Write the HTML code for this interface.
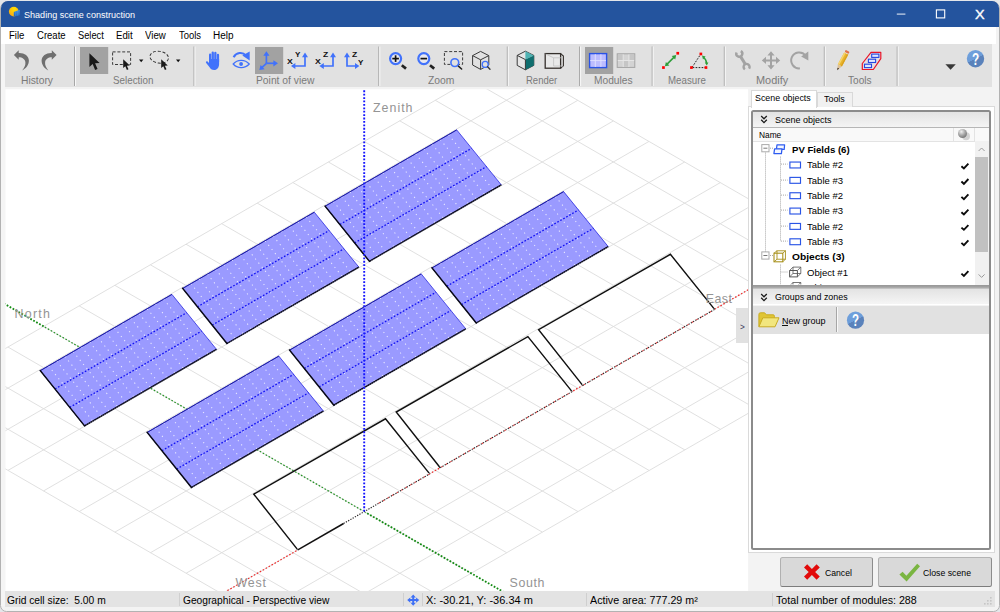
<!DOCTYPE html>
<html><head><meta charset="utf-8"><title>Shading scene construction</title>
<style>
html,body{margin:0;padding:0;}
body{width:1000px;height:612px;overflow:hidden;background:#f0f0f0;position:relative;font-family:"Liberation Sans",sans-serif;}
.a{position:absolute;}
.t{position:absolute;white-space:pre;transform-origin:0 0;display:block;}
svg{position:absolute;overflow:visible;}
</style></head><body>
<div class="a" style="left:0;top:0;width:1000px;height:612px;background:#e4e6ea"></div>
<div class="a" style="left:0;top:1px;width:1000px;height:610.6px;box-sizing:border-box;background:#f3f3f3;border:1.1px solid #b2b2b2;border-radius:8px 8px 6.5px 6.5px"></div>
<div class="a" style="left:0.5px;top:1px;width:998.5px;height:25.7px;background:#24549e;border-radius:7px 7px 0 0"></div>
<svg style="left:8px;top:5px" width="14" height="14" viewBox="0 0 14 14">
<defs><radialGradient id="sun" cx="0.55" cy="0.25" r="0.8"><stop offset="0" stop-color="#ffe000"/><stop offset="1" stop-color="#f7a516"/></radialGradient>
<linearGradient id="pvb" x1="0" y1="0" x2="0" y2="1"><stop offset="0" stop-color="#3f8fe0"/><stop offset="1" stop-color="#1d62b8"/></linearGradient></defs>
<circle cx="5.8" cy="6.6" r="4.9" fill="url(#sun)"/>
<path d="M5.8 6.9 L11.9 4.8 L11.9 10.2 L5.8 11.6 Z" fill="url(#pvb)"/>
<path d="M7.8 6.3V11.1M9.8 5.6V10.7" stroke="#5aa3ea" stroke-width="0.5"/>
</svg>
<span class="t" style="left:23.80px;top:9px;font-size:9.6px;line-height:11px;color:#fff;transform:scaleX(0.9429);">Shading scene construction</span>
<svg style="left:890px;top:4px" width="100" height="20" viewBox="890 4 100 20">
<path d="M896.8 14.1H905.4" stroke="#dfe6f2" stroke-width="1.1"/>
<rect x="936.4" y="9.9" width="8.3" height="8" fill="none" stroke="#fff" stroke-width="1.1"/>
</svg>
<span class="t" style="left:974.60px;top:8px;font-size:12.5px;line-height:14px;color:#fff;transform:scaleX(1.1514);-webkit-text-stroke:0.35px #fff;">X</span>
<div class="a" style="left:1px;top:26.7px;width:994.5px;height:17.3px;background:#fff"></div>
<span class="t" style="left:9.40px;top:30px;font-size:10px;line-height:11px;color:#000;transform:scaleX(0.9558);">File</span>
<span class="t" style="left:36.80px;top:30px;font-size:10px;line-height:11px;color:#000;transform:scaleX(0.9529);">Create</span>
<span class="t" style="left:77.60px;top:30px;font-size:10px;line-height:11px;color:#000;transform:scaleX(0.9283);">Select</span>
<span class="t" style="left:116.00px;top:30px;font-size:10px;line-height:11px;color:#000;transform:scaleX(0.9634);">Edit</span>
<span class="t" style="left:144.80px;top:30px;font-size:10px;line-height:11px;color:#000;transform:scaleX(0.9677);">View</span>
<span class="t" style="left:178.50px;top:30px;font-size:10px;line-height:11px;color:#000;transform:scaleX(0.9424);">Tools</span>
<span class="t" style="left:213.00px;top:30px;font-size:10px;line-height:11px;color:#000;transform:scaleX(0.9968);">Help</span>
<div class="a" style="left:1.1px;top:44px;width:4.2px;height:562px;background:#f5f5f5"></div>
<div class="a" style="left:5px;top:44px;width:987px;height:43px;background:#e1e1e1"></div>
<div class="a" style="left:5.2px;top:591px;width:989.6px;height:15.7px;background:#e3e3e3"></div>
<div class="a" style="left:178.9px;top:593.4px;width:1px;height:13px;background:#cfcfcf"></div>
<div class="a" style="left:403.0px;top:593.4px;width:1px;height:13px;background:#cfcfcf"></div>
<div class="a" style="left:421.7px;top:593.4px;width:1px;height:13px;background:#cfcfcf"></div>
<div class="a" style="left:586.1px;top:593.4px;width:1px;height:13px;background:#cfcfcf"></div>
<div class="a" style="left:772.0px;top:593.4px;width:1px;height:13px;background:#cfcfcf"></div>
<span class="t" style="left:6.50px;top:595px;font-size:10.2px;line-height:11px;color:#000;transform:scaleX(1.0075);">Grid cell size: &nbsp;5.00 m</span>
<span class="t" style="left:183.30px;top:595px;font-size:10.2px;line-height:11px;color:#000;transform:scaleX(1.0017);">Geographical - Perspective view</span>
<span class="t" style="left:425.50px;top:595px;font-size:10.2px;line-height:11px;color:#000;transform:scaleX(1.0805);">X: -30.21, Y: -36.34 m</span>
<span class="t" style="left:590.20px;top:595px;font-size:10.2px;line-height:11px;color:#000;transform:scaleX(1.0516);">Active area: 777.29 m²</span>
<span class="t" style="left:776.40px;top:595px;font-size:10.2px;line-height:11px;color:#000;transform:scaleX(1.0486);">Total number of modules: 288</span>
<svg style="left:407.4px;top:593.9px" width="12.4" height="12.2" viewBox="0 0 14 13">
<path d="M7 0.2 L10 3.5 H8.1 V5.4 H10.3 V3.5 L13.8 6.5 L10.3 9.5 V7.6 H8.1 V9.5 H10 L7 12.8 L4 9.5 H5.9 V7.6 H3.7 V9.5 L0.2 6.5 L3.7 3.5 V5.4 H5.9 V3.5 H4 Z" fill="#3f70f6"/>
</svg>
<svg style="left:981.6px;top:595.2px" width="11" height="11" viewBox="0 0 11 11">
<g fill="#c6c6c6"><rect x="8" y="2" width="1.6" height="1.6"/><rect x="5" y="5" width="1.6" height="1.6"/><rect x="8" y="5" width="1.6" height="1.6"/><rect x="2" y="8" width="1.6" height="1.6"/><rect x="5" y="8" width="1.6" height="1.6"/><rect x="8" y="8" width="1.6" height="1.6"/></g></svg>
<svg style="left:0;top:44px" width="1000" height="44" viewBox="0 44 1000 44"><path d="M74.5 46.5V86" stroke="#a6a6a6" stroke-width="1"/><path d="M75.5 46.5V86" stroke="#f8f8f8" stroke-width="1"/><path d="M194 46.5V86" stroke="#a6a6a6" stroke-width="1"/><path d="M195 46.5V86" stroke="#f8f8f8" stroke-width="1"/><path d="M378.8 46.5V86" stroke="#a6a6a6" stroke-width="1"/><path d="M379.8 46.5V86" stroke="#f8f8f8" stroke-width="1"/><path d="M507.3 46.5V86" stroke="#a6a6a6" stroke-width="1"/><path d="M508.3 46.5V86" stroke="#f8f8f8" stroke-width="1"/><path d="M579.6 46.5V86" stroke="#a6a6a6" stroke-width="1"/><path d="M580.6 46.5V86" stroke="#f8f8f8" stroke-width="1"/><path d="M652.2 46.5V86" stroke="#a6a6a6" stroke-width="1"/><path d="M653.2 46.5V86" stroke="#f8f8f8" stroke-width="1"/><path d="M724.3 46.5V86" stroke="#a6a6a6" stroke-width="1"/><path d="M725.3 46.5V86" stroke="#f8f8f8" stroke-width="1"/><path d="M824.3 46.5V86" stroke="#a6a6a6" stroke-width="1"/><path d="M825.3 46.5V86" stroke="#f8f8f8" stroke-width="1"/><path d="M897.2 46.5V86" stroke="#a6a6a6" stroke-width="1"/><path d="M898.2 46.5V86" stroke="#f8f8f8" stroke-width="1"/><rect x="80" y="47" width="28.2" height="27" fill="#a2a2a2"/><rect x="255" y="47" width="28.2" height="27" fill="#a2a2a2"/><rect x="585" y="47" width="28.2" height="27" fill="#a2a2a2"/><g><path d="M13.9 55 L18.7 50.2 V52.9 C24 52.6 28.9 55.6 28.9 60.6 C28.9 64.6 26.4 68.4 22.2 70.5 C24.6 67.6 25.6 65.2 25.4 62.6 C25.2 59.2 22.4 57.3 18.7 57.3 V59.8 Z" fill="#6f6f6f"/></g><g transform="translate(70.5,0) scale(-1,1)"><path d="M13.9 55 L18.7 50.2 V52.9 C24 52.6 28.9 55.6 28.9 60.6 C28.9 64.6 26.4 68.4 22.2 70.5 C24.6 67.6 25.6 65.2 25.4 62.6 C25.2 59.2 22.4 57.3 18.7 57.3 V59.8 Z" fill="#6f6f6f"/></g><path transform="translate(89.4,53.2) scale(1.02)" d="M0 0 L0 13.5 L3.2 10.6 L5.6 16.4 L8 15.4 L5.6 9.8 L10 9.6 Z" fill="#1a1a1a"/><rect x="112.6" y="51.9" width="18" height="12.6" fill="none" stroke="#333" stroke-width="0.95" stroke-dasharray="3 1.8"/><path transform="translate(123.2,59.2) scale(0.66)" d="M0 0 L0 13.5 L3.2 10.6 L5.6 16.4 L8 15.4 L5.6 9.8 L10 9.6 Z" fill="#1a1a1a"/><path d="M139 59.6h4.4l-2.2 2.6z" fill="#111"/><ellipse cx="159.2" cy="57.2" rx="9.3" ry="5.9" fill="none" stroke="#333" stroke-width="0.95" stroke-dasharray="3 1.8" transform="rotate(8 159.2 57.2)"/><path transform="translate(161.2,59.2) scale(0.66)" d="M0 0 L0 13.5 L3.2 10.6 L5.6 16.4 L8 15.4 L5.6 9.8 L10 9.6 Z" fill="#1a1a1a"/><path d="M176 59.6h4.4l-2.2 2.6z" fill="#111"/><g fill="#4172fb"><rect x="209" y="53.4" width="2.3" height="9" rx="1.15"/><rect x="211.6" y="51.5" width="2.3" height="10" rx="1.15"/><rect x="214.2" y="51.8" width="2.3" height="10" rx="1.15"/><rect x="216.8" y="53.8" width="2.3" height="9" rx="1.15"/>
<path d="M209 59 H219.1 V64 C219.1 67.4 217.2 70 214.2 70 C211.8 70 210.4 68.8 209.4 67 L206.2 63 C205.4 61.8 206.6 60.8 207.6 61.6 L209 63 Z"/></g><g fill="none" stroke="#4172fb"><path d="M233.2 64 C237.4 59.2 245 59.2 249.2 64 C245 68.8 237.4 68.8 233.2 64 Z" stroke-width="1.25"/><path d="M233.6 57.2 C236.4 52.2 242.6 51.6 246 55.6" stroke-width="2.1"/></g>
<circle cx="241.1" cy="64" r="1.9" fill="#4172fb"/><path d="M242.3 55.6 L249.7 51.5 L249.7 60.4 Z" fill="#4172fb"/><g stroke="#4172fb" stroke-width="1.7" fill="none"><path d="M266.4 63.3 V54"/><path d="M266.4 63.3 L261.6 67.8"/><path d="M266.4 63.3 L274.5 63.3"/></g>
<g fill="#4172fb"><path d="M266.4 51.2 L269.5 55.8 H263.3 Z"/><path d="M259.3 70.1 L260.6 65 L264.6 69.2 Z"/><path d="M278 63.3 L273.4 60.2 V66.4 Z"/></g><g stroke="#4172fb" stroke-width="1.7" fill="none"><path d="M305 56.5 V66 H294.6"/></g><g fill="#4172fb"><path d="M305 52.6 L308 57.2 H302 Z"/><path d="M291 66 L295.4 63 V69 Z"/></g><g stroke="#4172fb" stroke-width="1.7" fill="none"><path d="M333 56.5 V66 H322.6"/></g><g fill="#4172fb"><path d="M333 52.6 L336 57.2 H330 Z"/><path d="M319.4 66 L323.79999999999995 63 V69 Z"/></g><g stroke="#4172fb" stroke-width="1.7" fill="none"><path d="M347 56.5 V66 H356"/></g><g fill="#4172fb"><path d="M347 52.6 L350 57.2 H344 Z"/><path d="M359.4 66 L355.0 63 V69 Z"/></g><circle cx="395.6" cy="58.6" r="5.5" fill="#e9e9ef" stroke="#4172fb" stroke-width="2.2"/><path d="M401.8 65.2 L406.0 68.6" stroke="#222" stroke-width="2.7" stroke-linecap="butt"/><path d="M392.3 58.6 H398.90000000000003" stroke="#111" stroke-width="1.7"/><path d="M395.6 55.300000000000004 V61.9" stroke="#111" stroke-width="1.7"/><circle cx="423.8" cy="58.6" r="5.5" fill="#e9e9ef" stroke="#4172fb" stroke-width="2.2"/><path d="M430.0 65.2 L434.2 68.6" stroke="#222" stroke-width="2.7" stroke-linecap="butt"/><path d="M420.5 58.6 H427.1" stroke="#111" stroke-width="1.7"/><rect x="444.4" y="51.6" width="18.2" height="12.8" fill="none" stroke="#333" stroke-width="0.95" stroke-dasharray="3 1.8"/><circle cx="454.8" cy="62.6" r="3.9" fill="#e1e1e1" stroke="#4172fb" stroke-width="1.6"/><path d="M458.4 66.2 L461.6 69" stroke="#222" stroke-width="1.6" stroke-linecap="round"/><g fill="none" stroke="#3a3a3a" stroke-width="1"><path d="M480.6 51.4 L488.8 55.6 V65 L480.6 69.4 L472.6 65 V55.6 Z"/><path d="M472.6 55.6 L480.6 59.8 L488.8 55.6 M480.6 59.8 V69.4"/></g><circle cx="485.2" cy="64.4" r="3" fill="#e1e1e1" stroke="#4172fb" stroke-width="1.3"/><path d="M487.6 66.8 L490 69.2" stroke="#333" stroke-width="1.3" stroke-linecap="round"/><path d="M525.4 51.2 L533.8 55.4 V65.4 L525.4 69.8 L517.2 65.4 V55.4 Z" fill="#e6e6e6" stroke="#3a3a3a" stroke-width="1"/><path d="M525.4 51.2 L533.8 55.4 L525.4 59.6 Z" fill="#4fb3b3"/><path d="M525.4 59.6 L533.8 55.4 V65.4 L525.4 69.8 Z" fill="#0f6e6e"/><path d="M517.2 55.4 L525.4 59.6 V69.8" fill="none" stroke="#3a3a3a" stroke-width="1"/><g fill="none"><rect x="545.2" y="53.6" width="15.4" height="14.6" stroke="#35302c" stroke-width="1.3" fill="#e9e9e9"/><path d="M560.6 53.6 L563.4 56 V65.8 L560.6 68.2" stroke="#35302c" stroke-width="1.1"/><path d="M545.6 54 L553.6 57.8 H563 M553.6 57.8 V66 H563" stroke="#c2c2c2" stroke-width="0.8"/></g><rect x="589.6" y="53.6" width="17" height="14" fill="#bcbcff" stroke="#2a53e6" stroke-width="1.4"/><path d="M595.3 54.2 V67 M600.9 54.2 V67 M590.2 60.6 H606.0" stroke="#e2e2ff" stroke-width="0.9"/><rect x="617.2" y="53.8" width="17.6" height="13.6" fill="#d3d3d3" stroke="#a3a3a3" stroke-width="1"/><path d="M618 54.6 h5.2 v5.4 h-5.2z M629.2 54.6 h5 v5.4 h-5z M623.6 61 h5.2 v5.6 h-5.2z" fill="#c6c6c6"/><path d="M623.2 54.4 V67 M628.9 54.4 V67 M617.8 60.5 H634.2" stroke="#e6e6e6" stroke-width="0.9"/><path d="M666.6 64.6 L674.6 56.6" stroke="#2e9e3a" stroke-width="1.5"/><path d="M664.9 66.3 L665.9 61.9 L669.4 65.4 Z M676.2 55 L675.2 59.4 L671.7 55.9 Z" fill="#2e9e3a"/><rect x="662.1" y="66.2" width="2.7" height="2.7" fill="#f00"/><rect x="676.4" y="51.9" width="2.7" height="2.7" fill="#f00"/><path d="M692.2 67.2 L700.4 54.6 M692.6 67.6 H705.4" stroke="#222" stroke-width="1" stroke-dasharray="1.7 1.3" fill="none"/><path d="M703.4 57.2 C705.6 59 706.6 61 706.6 63.4" stroke="#2e9e3a" stroke-width="1.4" fill="none"/><path d="M702 55.6 L705.6 56.6 L703 59.4 Z M706.8 65.6 L704.8 62.4 L708.4 62.4 Z" fill="#2e9e3a"/><rect x="690.1" y="66.2" width="2.7" height="2.7" fill="#f00"/><rect x="699.5" y="52.6" width="2.7" height="2.7" fill="#f00"/><rect x="704.6" y="66.2" width="2.7" height="2.7" fill="#f00"/><path d="M740.6 56.6 L745.2 64" stroke="#a3a3a3" stroke-width="3" stroke-linecap="butt"/><path d="M740.80 51.10 A3.0 3.0 0 1 1 736.58 52.43" stroke="#a3a3a3" stroke-width="2.4" fill="none"/><path d="M744.88 69.36 A3.0 3.0 0 1 1 749.06 68.62" stroke="#a3a3a3" stroke-width="2.4" fill="none"/><g stroke="#a3a3a3" stroke-width="2" fill="none"><path d="M771 55 V66 M765.6 60.4 H776.4"/></g><g fill="#a3a3a3"><path d="M771 51.3 L774.6 55.6 H767.4 Z M771 69.5 L774.6 65.2 H767.4 Z M761.8 60.4 L766 56.8 V64 Z M780.2 60.4 L776 56.8 V64 Z"/></g><path d="M799.90 68.37 A8.0 8.0 0 1 1 805.50 55.47" stroke="#a3a3a3" stroke-width="2" fill="none"/><path d="M801.2 56.4 L808.3 51.4 L808.3 60.6 Z" fill="#a3a3a3"/><g transform="rotate(28.3 842.45 60.55)"><rect x="840.2" y="52.4" width="4.5" height="13.6" fill="#e9b52c"/><rect x="840.2" y="52.4" width="1.5" height="13.6" fill="#f5d470"/><rect x="843.5" y="52.4" width="1.2" height="13.6" fill="#d9a01e"/><rect x="840.2" y="51.4" width="4.5" height="1.2" fill="#e6e0d8"/><rect x="840.2" y="49.6" width="4.5" height="2.2" rx="0.9" fill="#e2724a"/><path d="M840.2 66 L842.45 71.4 L844.7 66 Z" fill="#dcc096"/><path d="M841.5 69.2 L842.45 71.5 L843.4 69.2 Z" fill="#3a2a20"/></g><path d="M871 52.4 H880.8 V58.6 L873.3 69.5 H862.3 V63.5 Z" fill="#e6e0e2" stroke="#e8162a" stroke-width="1.2" stroke-linejoin="round"/><g fill="#dfe6ff" stroke="#2546e0" stroke-width="1.1"><rect x="871.7" y="54.1" width="7.2" height="3.3"/><rect x="868.4" y="59.2" width="7.2" height="3.3"/><rect x="864.5" y="64.2" width="7" height="3.4"/></g><path d="M945.4 64.3 H955.8 L950.6 69.7 Z" fill="#383838"/><defs><linearGradient id="hg1" x1="0.3" y1="0.1" x2="0.7" y2="0.9"><stop offset="0" stop-color="#6fa0dc"/><stop offset="0.5" stop-color="#6c9cd8"/><stop offset="0.5" stop-color="#5a82bb"/><stop offset="1" stop-color="#5a82bb"/></linearGradient></defs>
<circle cx="975.5" cy="58.7" r="8.7" fill="url(#hg1)"/></svg>
<span class="t" style="left:972.00px;top:50px;font-size:16.5px;line-height:18px;color:#fff;font-weight:bold;transform:scaleX(0.7144);">?</span>
<span class="t" style="left:286.80px;top:57px;font-size:8px;line-height:9px;color:#111;font-weight:bold;transform:scaleX(1.0869);">X</span>
<span class="t" style="left:295.20px;top:50px;font-size:8px;line-height:9px;color:#111;font-weight:bold;transform:scaleX(1.0119);">Y</span>
<span class="t" style="left:314.80px;top:57px;font-size:8px;line-height:9px;color:#111;font-weight:bold;transform:scaleX(1.0869);">X</span>
<span class="t" style="left:323.00px;top:50px;font-size:8px;line-height:9px;color:#111;font-weight:bold;transform:scaleX(1.0642);">Z</span>
<span class="t" style="left:351.60px;top:50px;font-size:8px;line-height:9px;color:#111;font-weight:bold;transform:scaleX(1.0642);">Z</span>
<span class="t" style="left:357.80px;top:58px;font-size:8px;line-height:9px;color:#111;font-weight:bold;transform:scaleX(1.0119);">Y</span>
<span class="t" style="left:20.60px;top:75px;font-size:10.3px;line-height:11px;color:#7a7a7a;transform:scaleX(0.9986);">History</span>
<span class="t" style="left:112.60px;top:75px;font-size:10.3px;line-height:11px;color:#7a7a7a;transform:scaleX(0.9535);">Selection</span>
<span class="t" style="left:255.60px;top:75px;font-size:10.3px;line-height:11px;color:#7a7a7a;transform:scaleX(1.0001);">Point of view</span>
<span class="t" style="left:427.60px;top:75px;font-size:10.3px;line-height:11px;color:#7a7a7a;transform:scaleX(1.0028);">Zoom</span>
<span class="t" style="left:526.40px;top:75px;font-size:10.3px;line-height:11px;color:#7a7a7a;transform:scaleX(0.9236);">Render</span>
<span class="t" style="left:594.40px;top:75px;font-size:10.3px;line-height:11px;color:#7a7a7a;transform:scaleX(0.9915);">Modules</span>
<span class="t" style="left:667.60px;top:75px;font-size:10.3px;line-height:11px;color:#7a7a7a;transform:scaleX(0.9433);">Measure</span>
<span class="t" style="left:756.40px;top:75px;font-size:10.3px;line-height:11px;color:#7a7a7a;transform:scaleX(1.0615);">Modify</span>
<span class="t" style="left:848.30px;top:75px;font-size:10.3px;line-height:11px;color:#7a7a7a;transform:scaleX(0.9774);">Tools</span>
<svg style="left:0;top:0" width="1000" height="612" viewBox="0 0 1000 612"><defs><clipPath id="scclip"><rect x="5.4" y="89.3" width="742.7" height="501.59999999999997"/></clipPath></defs><rect x="5.4" y="89.3" width="742.7" height="501.59999999999997" fill="#fff"/><g clip-path="url(#scclip)"><path d="M-98.9 408.7L328.7 655.5M-63.3 388.1L364.3 635.0M-27.7 367.5L399.9 614.4M7.9 347.0L435.5 593.8M43.6 326.4L471.1 573.3M79.2 305.9L506.7 552.7M114.8 285.3L542.3 532.1M150.4 264.8L578.0 511.6M186.0 244.2L613.6 491.0M221.6 223.6L649.2 470.5M257.2 203.1L684.8 449.9M292.8 182.5L720.4 429.3M328.4 162.0L756.0 408.8M364.1 141.4L791.6 388.2M399.7 120.8L827.2 367.7M435.3 100.3L862.8 347.1M470.9 79.7L898.4 326.6M506.5 59.2L934.1 306.0M-98.9 408.7L506.5 59.2M-63.2 429.2L542.1 79.7M-27.6 449.8L577.8 100.3M8.0 470.4L613.4 120.9M43.6 490.9L649.0 141.4M79.3 511.5L684.6 162.0M114.9 532.1L720.3 182.6M150.5 552.7L755.9 203.1M186.2 573.2L791.5 223.7M221.8 593.8L827.2 244.3M257.4 614.4L862.8 264.9M293.1 634.9L898.4 285.4M328.7 655.5L934.1 306.0" stroke="#dcdcdc" stroke-width="0.9" fill="none"/><path d="M364.2 511.6L43.6 326.4" stroke="#128a12" stroke-width="1.25" stroke-dasharray="1.6 1.8" fill="none" opacity="0.9"/><path d="M43.6 326.4L-27.7 285.3" stroke="#128a12" stroke-width="1.8" stroke-dasharray="1.75 1.65" fill="none"/><path d="M364.2 511.6L542.4 614.4" stroke="#128a12" stroke-width="1.8" stroke-dasharray="1.75 1.65" fill="none"/><path d="M364.2 511.6L186.2 614.4" stroke="#f01818" stroke-width="1.2" stroke-dasharray="1.6 1.8" fill="none" opacity="0.9"/><path d="M364.2 511.6L791.5 264.8" stroke="#f01818" stroke-width="1.25" stroke-dasharray="1.5 1.9" fill="none" opacity="0.92"/><path d="M40.3 370.6L171.9 294.4L216.5 349.4L84.5 425.8Z" fill="#9a9aff" stroke="#2a2ae0" stroke-width="0.8"/><path d="M48.5 365.9L92.7 421.0M56.7 361.1L101.0 416.2M64.9 356.4L109.2 411.4M73.2 351.6L117.5 406.7M81.4 346.8L125.7 401.9M89.6 342.1L134.0 397.1M97.8 337.3L142.2 392.3M106.1 332.5L150.5 387.6M114.3 327.8L158.7 382.8M122.5 323.0L167.0 378.0M130.7 318.2L175.2 373.3M139.0 313.5L183.5 368.5M147.2 308.7L191.7 363.7M155.4 303.9L200.0 358.9M163.6 299.2L208.2 354.2" stroke="#fff" stroke-width="1.05" stroke-dasharray="1.2 4.1" fill="none" opacity="0.78"/><path d="M55.0 389.0L186.7 312.7M69.7 407.4L201.6 331.1" stroke="#1212f4" stroke-width="1.3" stroke-dasharray="1.7 1.75" fill="none"/><path d="M171.9 294.4L40.3 370.6" stroke="#1a1a9a" stroke-width="0.95" fill="none"/><path d="M40.3 370.6L84.5 425.8" stroke="#0a0a14" stroke-width="1.5" fill="none" stroke-linecap="square"/><path d="M84.5 425.8L216.5 349.4" stroke="#0a0a14" stroke-width="1.35" fill="none"/><path d="M86.0 425.4L216.5 349.9" stroke="#fff" stroke-width="0.9" stroke-dasharray="0.8 1.5" fill="none" opacity="0.55"/><path d="M182.7 288.4L314.3 212.2L358.9 267.2L226.9 343.5Z" fill="#9a9aff" stroke="#2a2ae0" stroke-width="0.8"/><path d="M190.9 283.6L235.2 338.7M199.2 278.9L243.4 334.0M207.4 274.1L251.7 329.2M215.6 269.3L259.9 324.4M223.8 264.6L268.2 319.7M232.1 259.8L276.4 314.9M240.3 255.1L284.7 310.1M248.5 250.3L292.9 305.3M256.7 245.5L301.2 300.6M265.0 240.8L309.4 295.8M273.2 236.0L317.7 291.0M281.4 231.2L325.9 286.2M289.6 226.5L334.2 281.5M297.9 221.7L342.4 276.7M306.1 216.9L350.7 271.9" stroke="#fff" stroke-width="1.05" stroke-dasharray="1.2 4.1" fill="none" opacity="0.78"/><path d="M197.4 306.8L329.2 230.5M212.2 325.1L344.0 248.8" stroke="#1212f4" stroke-width="1.3" stroke-dasharray="1.7 1.75" fill="none"/><path d="M314.3 212.2L182.7 288.4" stroke="#1a1a9a" stroke-width="0.95" fill="none"/><path d="M182.7 288.4L226.9 343.5" stroke="#0a0a14" stroke-width="1.5" fill="none" stroke-linecap="square"/><path d="M226.9 343.5L358.9 267.2" stroke="#0a0a14" stroke-width="1.35" fill="none"/><path d="M228.4 343.2L358.9 267.7" stroke="#fff" stroke-width="0.9" stroke-dasharray="0.8 1.5" fill="none" opacity="0.55"/><path d="M325.1 206.2L456.7 129.9L501.3 184.9L369.4 261.3Z" fill="#9a9aff" stroke="#2a2ae0" stroke-width="0.8"/><path d="M333.4 201.4L377.6 256.5M341.6 196.6L385.8 251.7M349.8 191.9L394.1 247.0M358.0 187.1L402.3 242.2M366.3 182.3L410.6 237.4M374.5 177.6L418.8 232.6M382.7 172.8L427.1 227.9M390.9 168.0L435.3 223.1M399.2 163.3L443.6 218.3M407.4 158.5L451.8 213.6M415.6 153.7L460.1 208.8M423.8 149.0L468.3 204.0M432.1 144.2L476.6 199.2M440.3 139.5L484.8 194.5M448.5 134.7L493.1 189.7" stroke="#fff" stroke-width="1.05" stroke-dasharray="1.2 4.1" fill="none" opacity="0.78"/><path d="M339.9 224.5L471.6 148.3M354.6 242.9L486.5 166.6" stroke="#1212f4" stroke-width="1.3" stroke-dasharray="1.7 1.75" fill="none"/><path d="M456.7 129.9L325.1 206.2" stroke="#1a1a9a" stroke-width="0.95" fill="none"/><path d="M325.1 206.2L369.4 261.3" stroke="#0a0a14" stroke-width="1.5" fill="none" stroke-linecap="square"/><path d="M369.4 261.3L501.3 184.9" stroke="#0a0a14" stroke-width="1.35" fill="none"/><path d="M370.9 261.0L501.3 185.5" stroke="#fff" stroke-width="0.9" stroke-dasharray="0.8 1.5" fill="none" opacity="0.55"/><path d="M147.2 432.4L278.8 356.1L323.4 411.1L191.4 487.5Z" fill="#9a9aff" stroke="#2a2ae0" stroke-width="0.8"/><path d="M155.4 427.6L199.6 482.7M163.6 422.8L207.9 477.9M171.8 418.1L216.1 473.1M180.1 413.3L224.4 468.4M188.3 408.5L232.6 463.6M196.5 403.8L240.9 458.8M204.7 399.0L249.1 454.1M213.0 394.2L257.4 449.3M221.2 389.5L265.6 444.5M229.4 384.7L273.9 439.7M237.6 379.9L282.1 435.0M245.9 375.2L290.4 430.2M254.1 370.4L298.6 425.4M262.3 365.6L306.9 420.7M270.5 360.9L315.1 415.9" stroke="#fff" stroke-width="1.05" stroke-dasharray="1.2 4.1" fill="none" opacity="0.78"/><path d="M161.9 450.7L293.6 374.4M176.6 469.1L308.5 392.8" stroke="#1212f4" stroke-width="1.3" stroke-dasharray="1.7 1.75" fill="none"/><path d="M278.8 356.1L147.2 432.4" stroke="#1a1a9a" stroke-width="0.95" fill="none"/><path d="M147.2 432.4L191.4 487.5" stroke="#0a0a14" stroke-width="1.5" fill="none" stroke-linecap="square"/><path d="M191.4 487.5L323.4 411.1" stroke="#0a0a14" stroke-width="1.35" fill="none"/><path d="M192.9 487.2L323.4 411.7" stroke="#fff" stroke-width="0.9" stroke-dasharray="0.8 1.5" fill="none" opacity="0.55"/><path d="M289.6 350.1L421.2 273.9L465.8 328.9L333.8 405.2Z" fill="#9a9aff" stroke="#2a2ae0" stroke-width="0.8"/><path d="M297.8 345.4L342.0 400.4M306.0 340.6L350.3 395.7M314.3 335.8L358.5 390.9M322.5 331.1L366.8 386.1M330.7 326.3L375.0 381.4M338.9 321.5L383.3 376.6M347.2 316.8L391.5 371.8M355.4 312.0L399.8 367.0M363.6 307.2L408.0 362.3M371.8 302.5L416.3 357.5M380.1 297.7L424.5 352.7M388.3 292.9L432.8 348.0M396.5 288.2L441.0 343.2M404.7 283.4L449.3 338.4M413.0 278.6L457.5 333.6" stroke="#fff" stroke-width="1.05" stroke-dasharray="1.2 4.1" fill="none" opacity="0.78"/><path d="M304.3 368.5L436.1 292.2M319.1 386.9L450.9 310.5" stroke="#1212f4" stroke-width="1.3" stroke-dasharray="1.7 1.75" fill="none"/><path d="M421.2 273.9L289.6 350.1" stroke="#1a1a9a" stroke-width="0.95" fill="none"/><path d="M289.6 350.1L333.8 405.2" stroke="#0a0a14" stroke-width="1.5" fill="none" stroke-linecap="square"/><path d="M333.8 405.2L465.8 328.9" stroke="#0a0a14" stroke-width="1.35" fill="none"/><path d="M335.3 404.9L465.8 329.4" stroke="#fff" stroke-width="0.9" stroke-dasharray="0.8 1.5" fill="none" opacity="0.55"/><path d="M432.0 267.9L563.6 191.6L608.2 246.6L476.2 323.0Z" fill="#9a9aff" stroke="#2a2ae0" stroke-width="0.8"/><path d="M440.3 263.1L484.5 318.2M448.5 258.3L492.7 313.4M456.7 253.6L501.0 308.7M464.9 248.8L509.2 303.9M473.2 244.1L517.5 299.1M481.4 239.3L525.7 294.3M489.6 234.5L534.0 289.6M497.8 229.8L542.2 284.8M506.1 225.0L550.5 280.0M514.3 220.2L558.7 275.3M522.5 215.5L567.0 270.5M530.7 210.7L575.2 265.7M539.0 205.9L583.5 260.9M547.2 201.2L591.7 256.2M555.4 196.4L600.0 251.4" stroke="#fff" stroke-width="1.05" stroke-dasharray="1.2 4.1" fill="none" opacity="0.78"/><path d="M446.8 286.2L578.5 210.0M461.5 304.6L593.4 228.3" stroke="#1212f4" stroke-width="1.3" stroke-dasharray="1.7 1.75" fill="none"/><path d="M563.6 191.6L432.0 267.9" stroke="#1a1a9a" stroke-width="0.95" fill="none"/><path d="M432.0 267.9L476.2 323.0" stroke="#0a0a14" stroke-width="1.5" fill="none" stroke-linecap="square"/><path d="M476.2 323.0L608.2 246.6" stroke="#0a0a14" stroke-width="1.35" fill="none"/><path d="M477.7 322.7L608.2 247.2" stroke="#fff" stroke-width="0.9" stroke-dasharray="0.8 1.5" fill="none" opacity="0.55"/><path d="M297.8 549.9L253.8 494.2L385.5 418.8L429.7 473.9" fill="none" stroke="#111" stroke-width="1.45" stroke-linejoin="miter"/><path d="M297.8 549.9L429.7 473.9" stroke="#fff" stroke-width="2.2" fill="none"/><path d="M297.8 549.9L343.6 523.5" stroke="#111" stroke-width="1.45" fill="none"/><path d="M343.6 523.5L429.7 473.9" stroke="#222" stroke-width="1.1" stroke-dasharray="1.3 1.3" fill="none"/><path d="M377.5 503.9L429.7 473.9" stroke="#f01818" stroke-width="1.1" stroke-dasharray="1.3 3.9" stroke-dashoffset="-1.3" fill="none" opacity="0.85"/><path d="M440.2 467.7L396.2 412.0L527.9 336.6L572.1 391.6" fill="none" stroke="#111" stroke-width="1.45" stroke-linejoin="miter"/><path d="M440.2 467.7L572.1 391.6" stroke="#fff" stroke-width="2.2" fill="none"/><path d="M440.2 467.7L572.1 391.6" stroke="#222" stroke-width="1.1" stroke-dasharray="1.3 1.3" fill="none"/><path d="M440.2 467.7L572.1 391.6" stroke="#f01818" stroke-width="1.1" stroke-dasharray="1.3 3.9" stroke-dashoffset="-1.3" fill="none" opacity="0.85"/><path d="M582.7 385.4L538.6 329.7L670.4 254.3L714.6 309.4" fill="none" stroke="#111" stroke-width="1.45" stroke-linejoin="miter"/><path d="M582.7 385.4L714.6 309.4" stroke="#fff" stroke-width="2.2" fill="none"/><path d="M582.7 385.4L714.6 309.4" stroke="#222" stroke-width="1.1" stroke-dasharray="1.3 1.3" fill="none"/><path d="M582.7 385.4L714.6 309.4" stroke="#f01818" stroke-width="1.1" stroke-dasharray="1.3 3.9" stroke-dashoffset="-1.3" fill="none" opacity="0.85"/><path d="M364.2 511.56 V88.2" stroke="#1414ff" stroke-width="1.9" stroke-dasharray="1.8 1.61" fill="none"/></g></svg>
<span class="t" style="left:373.0px;top:101px;font-size:12.4px;line-height:14px;color:#949494;letter-spacing:1.01px">Zenith</span>
<span class="t" style="left:14.5px;top:307px;font-size:12.4px;line-height:14px;color:#949494;letter-spacing:1.30px">North</span>
<span class="t" style="left:705.7px;top:292px;font-size:12.4px;line-height:14px;color:#949494;letter-spacing:0.50px">East</span>
<span class="t" style="left:235.6px;top:576px;font-size:12.4px;line-height:14px;color:#949494;letter-spacing:0.79px">West</span>
<span class="t" style="left:509.6px;top:576px;font-size:12.4px;line-height:14px;color:#949494;letter-spacing:0.62px">South</span>
<div class="a" style="left:736px;top:308px;width:12.2px;height:34.8px;background:#e1e1e1"></div>
<span class="t" style="left:739.60px;top:322px;font-size:9px;line-height:10px;color:#3a3a5a;transform:scaleX(0.9131);">></span>
<div class="a" style="left:748.1px;top:106.4px;width:247.1px;height:446.4px;box-sizing:border-box;border:1px solid #dadada;background:#fff"></div>
<div class="a" style="left:816.6px;top:91.6px;width:36.2px;height:15.4px;background:#f1f1f1;border:1px solid #d9d9d9;border-bottom:none;box-sizing:border-box"></div>
<div class="a" style="left:750.6px;top:89.6px;width:66.6px;height:18px;background:#fff;border:1px solid #d9d9d9;border-bottom:none;box-sizing:border-box"></div>
<span class="t" style="left:754.80px;top:92px;font-size:9.9px;line-height:11px;color:#000;transform:scaleX(0.8989);">Scene objects</span>
<span class="t" style="left:823.70px;top:93px;font-size:9.9px;line-height:11px;color:#000;transform:scaleX(0.9000);">Tools</span>
<div class="a" style="left:751.2px;top:110.2px;width:240.1px;height:439.4px;box-sizing:border-box;border:2px solid #8b8b8b;border-radius:2.5px;background:#fff"></div>
<div class="a" style="left:753.2px;top:112.1px;width:236.2px;height:14.9px;background:linear-gradient(#e3e3e3,#f4f4f4)"></div>
<div class="a" style="left:753.2px;top:126.7px;width:236.2px;height:0.9px;background:#b6b6b6"></div>
<svg style="left:759.9px;top:115.0px" width="8" height="9.2" viewBox="0 0 8 9.2"><path d="M1.2 1 L4 3.8 L6.8 1 M1.2 4.8 L4 7.6 L6.8 4.8" fill="none" stroke="#1a1a1a" stroke-width="1.3"/></svg>
<span class="t" style="left:775.10px;top:114px;font-size:9.9px;line-height:11px;color:#000;transform:scaleX(0.9118);">Scene objects</span>
<div class="a" style="left:753.2px;top:127.6px;width:236.2px;height:14.4px;background:#f9f9f9;border-bottom:1px solid #e3e3e3;box-sizing:border-box"></div>
<div class="a" style="left:953px;top:127.6px;width:1px;height:13.4px;background:#e3e3e3"></div>
<div class="a" style="left:973.8px;top:127.6px;width:1px;height:13.4px;background:#e3e3e3"></div>
<span class="t" style="left:758.70px;top:129px;font-size:9.9px;line-height:11px;color:#000;transform:scaleX(0.8445);">Name</span>
<svg style="left:956px;top:128px" width="16" height="13" viewBox="956 128 16 13"><defs><radialGradient id="sph" cx="0.38" cy="0.3" r="0.8"><stop offset="0" stop-color="#efefef"/><stop offset="0.5" stop-color="#a8a8a8"/><stop offset="1" stop-color="#6a6a6a"/></radialGradient></defs><circle cx="966" cy="136.2" r="4" fill="#d2d2d2"/><circle cx="962.5" cy="133.5" r="4.5" fill="url(#sph)"/></svg>
<div class="a" style="left:975.2px;top:141.4px;width:14.2px;height:143.5px;background:#f1f1f1"></div>
<div class="a" style="left:975.4px;top:157.2px;width:12.6px;height:94.4px;background:#c1c1c1"></div>
<svg style="left:975px;top:141px" width="15" height="145" viewBox="975 141 15 145"><path d="M978.6 151 L981.6 148 L984.6 151 M978.6 274.4 L981.6 277.4 L984.6 274.4" fill="none" stroke="#9a9a9a" stroke-width="1"/></svg>
<svg style="left:0;top:141.4px" width="1000" height="143.5" viewBox="0 141.4 1000 143.5"><defs><clipPath id="trc"><rect x="753.2" y="141.4" width="221" height="143.5"/></clipPath></defs><g clip-path="url(#trc)"><g stroke="#a8a8a8" stroke-width="1" stroke-dasharray="1 1" fill="none"><path d="M765.5 153 V252"/><path d="M780.5 157 V241.5"/><path d="M781 164.5 H787.6"/><path d="M781 180.5 H787.6"/><path d="M781 195.5 H787.6"/><path d="M781 210.5 H787.6"/><path d="M781 226.5 H787.6"/><path d="M781 241.5 H787.6"/><path d="M770 148.6 H773"/><path d="M770 255.9 H773"/><path d="M780.5 265 V286 M780.5 272.4 H788"/></g><rect x="761.8" y="145.0" width="7.2" height="7.2" fill="#fff" stroke="#aaa" stroke-width="1"/><path d="M763.4 148.6 H767.4" stroke="#777" stroke-width="1"/><rect x="761.8" y="252.3" width="7.2" height="7.2" fill="#fff" stroke="#aaa" stroke-width="1"/><path d="M763.4 255.9 H767.4" stroke="#777" stroke-width="1"/><g fill="#f4f7ff" stroke="#2e5cf0" stroke-width="1.25" stroke-linejoin="round"><path d="M777 145.2 H784.6 L784.2 149.8 H776.4 Z"/><path d="M774.6 149.2 H782 L781.4 154 H773.9 Z"/></g><rect x="789.9" y="162.45" width="10.6" height="5.9" fill="#fff" stroke="#2a55e6" stroke-width="1.15"/><rect x="789.9" y="177.79999999999998" width="10.6" height="5.9" fill="#fff" stroke="#2a55e6" stroke-width="1.15"/><rect x="789.9" y="193.15" width="10.6" height="5.9" fill="#fff" stroke="#2a55e6" stroke-width="1.15"/><rect x="789.9" y="208.5" width="10.6" height="5.9" fill="#fff" stroke="#2a55e6" stroke-width="1.15"/><rect x="789.9" y="223.85" width="10.6" height="5.9" fill="#fff" stroke="#2a55e6" stroke-width="1.15"/><rect x="789.9" y="239.2" width="10.6" height="5.9" fill="#fff" stroke="#2a55e6" stroke-width="1.15"/><path d="M961.4 166.6 L963.9 168.8 L968.4 164.1" fill="none" stroke="#0c0c0c" stroke-width="1.9" stroke-linejoin="miter"/><path d="M961.4 181.9 L963.9 184.2 L968.4 179.4" fill="none" stroke="#0c0c0c" stroke-width="1.9" stroke-linejoin="miter"/><path d="M961.4 197.3 L963.9 199.6 L968.4 194.8" fill="none" stroke="#0c0c0c" stroke-width="1.9" stroke-linejoin="miter"/><path d="M961.4 212.6 L963.9 214.9 L968.4 210.1" fill="none" stroke="#0c0c0c" stroke-width="1.9" stroke-linejoin="miter"/><path d="M961.4 228.0 L963.9 230.2 L968.4 225.5" fill="none" stroke="#0c0c0c" stroke-width="1.9" stroke-linejoin="miter"/><path d="M961.4 243.3 L963.9 245.6 L968.4 240.8" fill="none" stroke="#0c0c0c" stroke-width="1.9" stroke-linejoin="miter"/><path d="M961.4 274.0 L963.9 276.3 L968.4 271.5" fill="none" stroke="#0c0c0c" stroke-width="1.9" stroke-linejoin="miter"/><g fill="none" stroke="#a8921e" stroke-width="1.1"><rect x="774" y="253.6" width="8.8" height="8.6"/><rect x="777" y="251.2" width="8.4" height="8.4" stroke-width="0.9"/><path d="M774 253.6 L777 251.2 M782.8 253.6 L785.4 251.2 M774 262.2 L777 259.6 M782.8 262.2 L785.4 259.6" stroke-width="0.9"/></g><g fill="none" stroke="#555" stroke-width="1"><path d="M789.6 270.90000000000003 H797.4 V277.3 H789.6 Z"/><path d="M789.6 270.90000000000003 L793 267.5 H800.8 V273.90000000000003 L797.4 277.3 M797.4 270.90000000000003 L800.8 267.5 M789.6 277.3 L793 273.90000000000003 H800.8 M793 267.5 V273.90000000000003" stroke-width="0.8"/></g><g fill="none" stroke="#555" stroke-width="1"><path d="M789.6 286.3 H797.4 V292.7 H789.6 Z"/><path d="M789.6 286.3 L793 282.9 H800.8 V289.3 L797.4 292.7 M797.4 286.3 L800.8 282.9 M789.6 292.7 L793 289.3 H800.8 M793 282.9 V289.3" stroke-width="0.8"/></g></g></svg>
<span class="t" style="left:791.80px;top:144px;font-size:9.9px;line-height:11px;color:#000;font-weight:bold;transform:scaleX(0.9729);">PV Fields (6)</span>
<span class="t" style="left:807.00px;top:159px;font-size:9.9px;line-height:11px;color:#000;transform:scaleX(0.9672);">Table #2</span>
<span class="t" style="left:807.00px;top:175px;font-size:9.9px;line-height:11px;color:#000;transform:scaleX(0.9672);">Table #3</span>
<span class="t" style="left:807.00px;top:190px;font-size:9.9px;line-height:11px;color:#000;transform:scaleX(0.9672);">Table #2</span>
<span class="t" style="left:807.00px;top:205px;font-size:9.9px;line-height:11px;color:#000;transform:scaleX(0.9672);">Table #3</span>
<span class="t" style="left:807.00px;top:221px;font-size:9.9px;line-height:11px;color:#000;transform:scaleX(0.9672);">Table #2</span>
<span class="t" style="left:807.00px;top:236px;font-size:9.9px;line-height:11px;color:#000;transform:scaleX(0.9672);">Table #3</span>
<span class="t" style="left:791.50px;top:251px;font-size:9.9px;line-height:11px;color:#000;font-weight:bold;transform:scaleX(1.0340);">Objects (3)</span>
<span class="t" style="left:806.80px;top:267px;font-size:9.9px;line-height:11px;color:#000;transform:scaleX(0.9700);">Object #1</span>
<div class="a" style="left:800px;top:281px;width:60px;height:3.9px;overflow:hidden"><span class="t" style="left:6.8px;top:0.8px;font-size:9.9px;line-height:11px;color:#000;transform:scaleX(0.97)">Object #1</span></div>
<div class="a" style="left:753.2px;top:284.9px;width:236.2px;height:3.7px;background:linear-gradient(#979797,#a4a4a4 55%,#cfcfcf)"></div>
<div class="a" style="left:753.2px;top:288.6px;width:236.2px;height:15.9px;background:linear-gradient(#e3e3e3,#f5f5f5)"></div>
<div class="a" style="left:753.2px;top:304.5px;width:236.2px;height:1.1px;background:#f3f3f3"></div>
<svg style="left:759.9px;top:292.79999999999995px" width="8" height="9.2" viewBox="0 0 8 9.2"><path d="M1.2 1 L4 3.8 L6.8 1 M1.2 4.8 L4 7.6 L6.8 4.8" fill="none" stroke="#1a1a1a" stroke-width="1.3"/></svg>
<span class="t" style="left:775.10px;top:291px;font-size:9.9px;line-height:11px;color:#000;transform:scaleX(0.8999);">Groups and zones</span>
<div class="a" style="left:753.2px;top:305.6px;width:236.2px;height:28.4px;background:#e1e1e1"></div>
<div class="a" style="left:835.8px;top:307.4px;width:1px;height:25px;background:#a6a6a6"></div><div class="a" style="left:836.8px;top:307.4px;width:1px;height:25px;background:#f8f8f8"></div>
<svg style="left:757.6px;top:311.6px" width="22" height="16" viewBox="0 0 22 16"><path d="M0.9 14.6 V2.4 C0.9 1.4 1.5 0.8 2.5 0.8 H6.6 L8.4 2.8 H15.2 C16 2.8 16.4 3.4 16.4 4.2 V6" fill="#e0c534" stroke="#c9ac22" stroke-width="1"/><path d="M0.9 14.8 L4.8 5.8 H21 L17 14.8 Z" fill="#f2e67e" stroke="#c9ac22" stroke-width="1" stroke-linejoin="round"/></svg>
<span class="t" style="left:782.00px;top:315px;font-size:9.9px;line-height:11px;color:#000;transform:scaleX(0.9107);">New group</span>
<div class="a" style="left:782px;top:325.2px;width:6px;height:1px;background:#111"></div>
<svg style="left:845px;top:310px" width="22" height="22" viewBox="845 310 22 22"><defs><linearGradient id="hg2" x1="0.3" y1="0.1" x2="0.7" y2="0.9"><stop offset="0" stop-color="#6fa0dc"/><stop offset="0.5" stop-color="#6c9cd8"/><stop offset="0.5" stop-color="#5a82bb"/><stop offset="1" stop-color="#5a82bb"/></linearGradient></defs>
<circle cx="855.5" cy="320.2" r="8.6" fill="url(#hg2)"/></svg>
<span class="t" style="left:852.00px;top:311px;font-size:16.5px;line-height:18px;color:#fff;font-weight:bold;transform:scaleX(0.6946);">?</span>
<div class="a" style="left:780.3px;top:556.9px;width:92.8px;height:29.7px;box-sizing:border-box;background:#d9d9d9;border:1px solid;border-color:#b4b4b4 #8c8c8c #7c7c7c #b0b0b0;border-radius:2.5px"></div>
<div class="a" style="left:877.8px;top:556.9px;width:114.4px;height:29.7px;box-sizing:border-box;background:#d9d9d9;border:1px solid;border-color:#b4b4b4 #8c8c8c #7c7c7c #b0b0b0;border-radius:2.5px"></div>
<svg style="left:803px;top:563px" width="18" height="18" viewBox="803 563 18 18"><path d="M804 567.4 L807.2 564.2 L811.9 568.9 L816.6 564.2 L819.8 567.4 L815.1 572 L819.8 576.6 L816.6 579.8 L811.9 575.1 L807.2 579.8 L804 576.6 L808.7 572 Z" fill="#e20a0a"/></svg>
<svg style="left:898px;top:563px" width="24" height="20" viewBox="0 0 24 20"><path d="M1.4 11.6 L4.6 8.8 L8.4 12.8 L19.2 0.8 L22 3.2 L8.6 18.6 Z" fill="#7ab541"/></svg>
<span class="t" style="left:825.30px;top:567px;font-size:9.9px;line-height:11px;color:#000;transform:scaleX(0.8762);">Cancel</span>
<span class="t" style="left:922.80px;top:567px;font-size:9.9px;line-height:11px;color:#000;transform:scaleX(0.8830);">Close scene</span>
</body></html>
